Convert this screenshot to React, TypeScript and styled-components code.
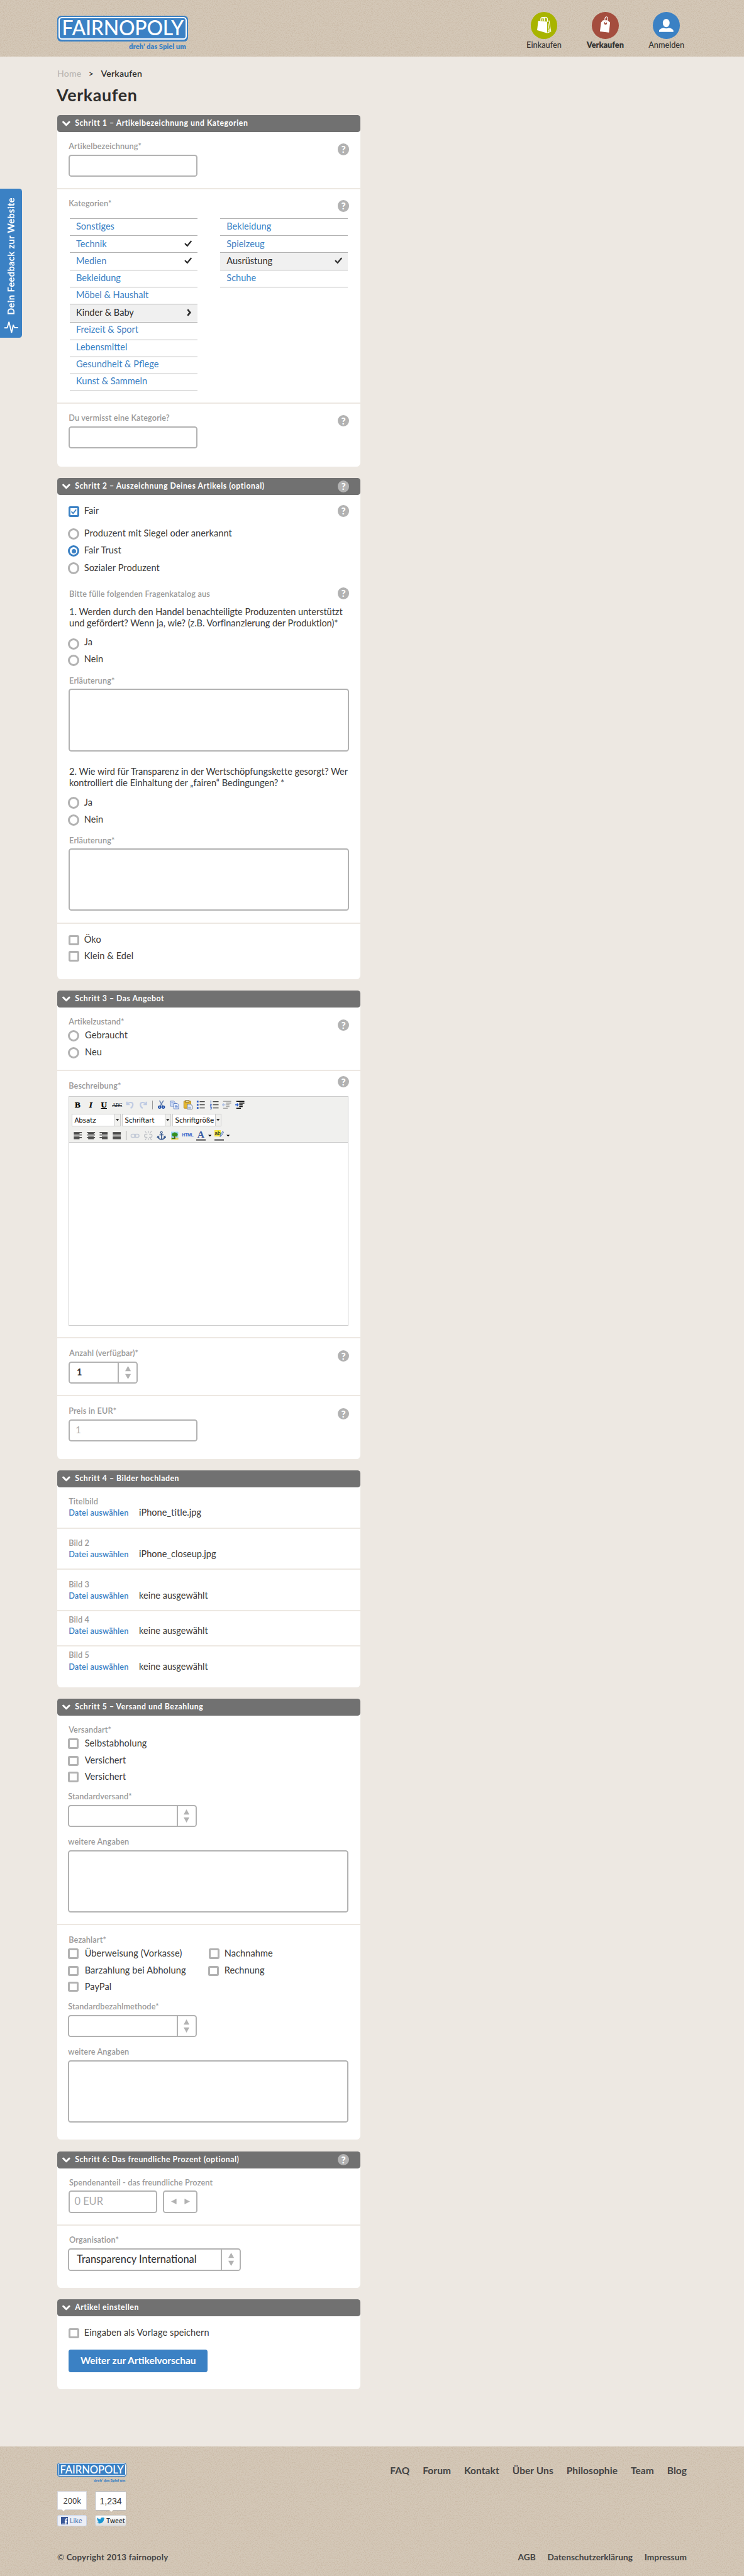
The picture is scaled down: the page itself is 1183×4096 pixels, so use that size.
import React from "react";
import styled, { createGlobalStyle, css } from "styled-components";

const BLUE = "#3b81c4";
const LINE = "#b2b2b2";
const RULE = "#ede8e2";

const GlobalStyle = createGlobalStyle`
  body {
    margin: 0;
    background: ${RULE};
    overflow-x: hidden;
  }
`;

const Page = styled.div`
  zoom: 0.91;
  width: 1300px;
  position: relative;
  background: ${RULE};
  color: #3a3a3a;
  font-family: Lato, "Open Sans", sans-serif;
  font-size: 16px;
  line-height: 20px;
  * {
    box-sizing: border-box;
  }
`;

/* ---------- linen bands ---------- */

const Band = styled.div<{ $h: number }>`
  position: relative;
  height: ${(p) => p.$h}px;
  background: #d4c8b8;
  overflow: hidden;
`;
const Grain = styled.svg`
  position: absolute;
  inset: 0;
  width: 100%;
  height: 100%;
`;
const Linen = ({ id }: { id: string }) => (
  <Grain aria-hidden="true">
    <filter id={id} x="0" y="0" width="100%" height="100%">
      <feTurbulence type="fractalNoise" baseFrequency="0.55 0.75" numOctaves="2" seed="4" />
      <feColorMatrix values="0 0 0 0 0.55  0 0 0 0 0.44  0 0 0 0 0.33  0 1.5 0 0 -0.62" />
    </filter>
    <rect width="100%" height="100%" filter={`url(#${id})`} />
  </Grain>
);

const HeaderInner = styled.div`
  position: relative;
  display: flex;
  justify-content: space-between;
  padding: 27px 100px 0;
`;

/* ---------- logo ---------- */

const LogoBox = styled.div<{ $small?: boolean }>`
  width: ${(p) => (p.$small ? 121 : 229)}px;
`;
const Plate = styled.div<{ $small?: boolean }>`
  height: ${(p) => (p.$small ? 23.5 : 45)}px;
  padding: ${(p) => (p.$small ? 1.2 : 2.3)}px;
  border-radius: ${(p) => (p.$small ? 4 : 7)}px;
  background: ${BLUE};
`;
const PlateInner = styled.div<{ $small?: boolean }>`
  height: 100%;
  display: flex;
  align-items: center;
  justify-content: center;
  border: ${(p) => (p.$small ? 1.1 : 2.2)}px solid #fff;
  border-radius: ${(p) => (p.$small ? 3 : 6)}px;
  color: #fff;
  white-space: nowrap;
  font-size: ${(p) => (p.$small ? 18.3 : 35)}px;
  line-height: 1;
  letter-spacing: ${(p) => (p.$small ? -0.1 : -0.2)}px;
  font-weight: 500;
`;
const Tagline = styled.div<{ $small?: boolean }>`
  margin: ${(p) => (p.$small ? "2px 2px 0 0" : "4px 4px 0 0")};
  text-align: right;
  color: ${BLUE};
  font-weight: 800;
  font-size: ${(p) => (p.$small ? 6.8 : 12.3)}px;
  line-height: ${(p) => (p.$small ? 9 : 12)}px;
`;
const Logo = ({ small }: { small?: boolean }) => (
  <LogoBox $small={small}>
    <Plate $small={small}>
      <PlateInner $small={small}>FAIRNOPOLY</PlateInner>
    </Plate>
    <Tagline $small={small}>dreh’ das Spiel um</Tagline>
  </LogoBox>
);

/* ---------- top navigation ---------- */

const TopNav = styled.nav`
  display: flex;
  margin: -6px -18px 0 0;
`;
const TopItem = styled.div<{ $active?: boolean }>`
  width: 107px;
  display: flex;
  flex-direction: column;
  align-items: center;
  font-size: 14px;
  font-weight: ${(p) => (p.$active ? 800 : 500)};
  color: #333;
  line-height: 20px;
`;
const Disc = styled.div<{ $c: string }>`
  width: 47px;
  height: 47px;
  border-radius: 50%;
  background: ${(p) => p.$c};
  svg {
    display: block;
  }
`;

const BagIcon = () => (
  <svg width="47" height="47" viewBox="0 0 47 47">
    <path d="M13 15.500 28.500 17 28.500 37 11 32Z" fill="#fff" />
    <path d="M17.5 16V13c0-4.5 6.500-4.500 6.500 0v3M21 16v-3c0-5 8-5 8 0v4" fill="none" stroke="#fff" strokeWidth="1.5" />
    <path d="M28.500 16.500 32 15.500 35 34 29 36.500M30.500 20l1.800 14M29.500 36l2.500-5 2.500 1" fill="none" stroke="#fff" strokeWidth="1.1" />
  </svg>
);
const TagIcon = () => (
  <svg width="47" height="47" viewBox="0 0 47 47">
    <path fillRule="evenodd" d="M19.500 14.500h8l4.500 4-2 17.500-15.800-1.800 2-15.700Zm4.500 2.500a2.600 2.600 0 1 0 .1 0Z" fill="#fff" />
    <path d="M24 19.500c-2-5-1.500-11 1.500-11s3 5-1 11" fill="none" stroke="#fff" strokeWidth="1.3" />
  </svg>
);
const UserIcon = () => (
  <svg width="47" height="47" viewBox="0 0 47 47">
    <ellipse cx="23.400" cy="19.300" rx="6" ry="7.300" fill="#fff" />
    <path d="M11 35v-2c0-3 5-4.800 8-5.200 2.500 1.500 6.500 1.500 9 0 3 .4 8 2.200 8 5.200v2Z" fill="#fff" />
  </svg>
);

/* ---------- feedback tab ---------- */

const Feedback = styled.aside`
  position: absolute;
  left: 0;
  top: 330px;
  width: 39px;
  height: 260px;
  padding-bottom: 7px;
  border-radius: 0 5px 5px 0;
  background: ${BLUE};
  color: #fff;
  display: flex;
  flex-direction: column;
  align-items: center;
  justify-content: flex-end;
  gap: 9px;
`;
const FeedbackText = styled.span`
  writing-mode: vertical-rl;
  transform: rotate(180deg);
  white-space: nowrap;
  font-weight: 700;
  font-size: 16px;
  line-height: 20px;
  letter-spacing: 0.45px;
`;

/* ---------- headings ---------- */

const Main = styled.main`
  width: 530px;
  margin-left: 100px;
`;
const Crumbs = styled.div`
  display: flex;
  padding-top: 20px;
  gap: 12.500px;
  font-size: 15.500px;
  font-weight: 600;
  color: #2e2e2e;
  letter-spacing: 0.2px;
`;
const CrumbHome = styled.span`
  color: #b9b6b2;
  font-weight: 500;
`;
const Title = styled.h1`
  margin: 9px 0 17px -1px;
  font-size: 29.500px;
  line-height: 36px;
  font-weight: 700;
  letter-spacing: 0.7px;
  color: #2e2e2e;
`;

/* ---------- panel ---------- */

const Panel = styled.section`
  margin-bottom: 20px;
  background: #fff;
  border-radius: 5px 5px 7px 7px;
`;
const PanelHead = styled.header`
  height: 30px;
  display: flex;
  align-items: center;
  padding: 0 20px 0 9px;
  border-radius: 5px;
  background: #717171;
  color: #fff;
  font-size: 13.500px;
  font-weight: 700;
  letter-spacing: 0.58px;
`;
const HeadTitle = styled.span`
  flex: 1;
  margin-left: 8px;
  padding-bottom: 1px;
`;
const Section = styled.div<{ $h: number; $last?: boolean }>`
  display: flow-root;
  height: ${(p) => p.$h}px;
  padding: 0 20px;
  ${(p) =>
    !p.$last &&
    css`
      border-bottom: 2.200px solid ${RULE};
    `}
`;
const Row = styled.div<{ $mt?: number }>`
  display: flex;
  justify-content: space-between;
  align-items: flex-start;
  height: 20px;
  margin-top: ${(p) => p.$mt ?? 15}px;
`;
const Label = styled.span<{ $x?: number }>`
  margin-left: ${(p) => p.$x ?? 0}px;
  color: #999;
  font-size: 14px;
  font-weight: 600;
  letter-spacing: 0.13px;
  white-space: nowrap;
`;
const HelpDot = styled.span<{ $dy?: number }>`
  flex: none;
  width: 20px;
  height: 20px;
  margin-top: ${(p) => p.$dy ?? 0}px;
  border-radius: 50%;
  background: ${LINE};
  color: #fff;
  text-align: center;
  font-size: 17px;
  line-height: 20px;
  font-weight: 900;
  letter-spacing: 0;
`;
const Help = ({ dy }: { dy?: number }) => <HelpDot $dy={dy}>?</HelpDot>;

const Chevron = () => (
  <svg width="14" height="10" viewBox="0 0 14 10">
    <path d="M1.800 2.200 7 7.400 12.200 2.200" fill="none" stroke="#fff" strokeWidth="3.300" strokeLinecap="round" strokeLinejoin="round" />
  </svg>
);

const Head = ({ title, help }: { title: string; help?: boolean }) => (
  <PanelHead>
    <Chevron />
    <HeadTitle>{title}</HeadTitle>
    {help && <Help />}
  </PanelHead>
);

const Field = ({ label, mt, x, dy, help }: { label: string; mt?: number; x?: number; dy?: number; help?: boolean }) => (
  <Row $mt={mt}>
    <Label $x={x}>{label}</Label>
    {help && <Help dy={dy} />}
  </Row>
);

/* ---------- inputs ---------- */

const Box = styled.div<{ $w: number; $h?: number; $ml?: number }>`
  display: flex;
  align-items: center;
  width: ${(p) => p.$w}px;
  height: ${(p) => p.$h ?? 39}px;
  margin: 5px 0 0 ${(p) => p.$ml ?? 0}px;
  border: 2.200px solid ${LINE};
  border-radius: 5px;
  background: #fff;
`;
const Value = styled.span<{ $size?: number; $muted?: boolean; $pl?: number; $bold?: boolean }>`
  flex: 1;
  padding: 0 0 1px ${(p) => p.$pl ?? 10}px;
  font-size: ${(p) => p.$size ?? 16}px;
  font-weight: ${(p) => (p.$bold ? 700 : 400)};
  color: ${(p) => (p.$muted ? "#aaa" : "#2e2e2e")};
`;
const Stepper = styled.span`
  width: 33px;
  height: 100%;
  display: flex;
  align-items: center;
  justify-content: center;
  border-left: 2.200px solid ${LINE};
`;
const Arrows = () => (
  <Stepper>
    <svg width="10" height="23" viewBox="0 0 10 23">
      <path d="M5 0 10 9H0ZM5 23 10 14H0Z" fill={LINE} />
    </svg>
  </Stepper>
);
const Pair = styled.div`
  display: flex;
  gap: 10px;
`;
const Sides = styled.span`
  flex: 1;
  display: flex;
  justify-content: center;
`;

/* ---------- radio and checkbox options ---------- */

const OptionRow = styled.label<{ $mt?: number; $x: number; $gap: number }>`
  display: flex;
  align-items: center;
  height: 20px;
  margin: ${(p) => p.$mt ?? 0}px 0 0 ${(p) => p.$x}px;
  gap: ${(p) => p.$gap}px;
`;
const Slot = styled.span`
  flex: none;
  width: 20px;
  height: 20px;
  display: flex;
  align-items: center;
  justify-content: center;
`;
const Ring = styled.span<{ $on?: boolean }>`
  width: 20px;
  height: 20px;
  border-radius: 50%;
  border: 3.300px solid ${(p) => (p.$on ? BLUE : LINE)};
  display: flex;
  align-items: center;
  justify-content: center;
  &::after {
    content: "";
    width: 8px;
    height: 8px;
    border-radius: 50%;
    background: ${(p) => (p.$on ? BLUE : "transparent")};
  }
`;
const Square = styled.span<{ $on?: boolean }>`
  width: 18px;
  height: 18px;
  border-radius: 3px;
  border: 3.300px solid ${(p) => (p.$on ? BLUE : LINE)};
  display: flex;
  align-items: center;
  justify-content: center;
`;
const OptionText = styled.span<{ $dy: number }>`
  white-space: nowrap;
  margin-top: ${(p) => -2 + p.$dy * 2}px;
  letter-spacing: 0.1px;
`;
type OptionProps = { text: string; kind?: "radio" | "check"; on?: boolean; mt?: number; x?: number; gap?: number; dy?: number };
const Option = ({ text, kind = "radio", on, mt, x = -1, gap = 8, dy = 0 }: OptionProps) => (
  <OptionRow $mt={mt} $x={x} $gap={gap}>
    <Slot>
      {kind === "radio" ? (
        <Ring $on={on} />
      ) : (
        <Square $on={on}>
          {on && (
            <svg width="12" height="12" viewBox="0 0 12 12">
              <path d="M1.800 6 5 9.300 10.500 2.300" fill="none" stroke={BLUE} strokeWidth="2.200" />
            </svg>
          )}
        </Square>
      )}
    </Slot>
    <OptionText $dy={dy}>{text}</OptionText>
  </OptionRow>
);

const Question = styled.p<{ $mt: number }>`
  margin: ${(p) => p.$mt}px -10px 0 1px;
  line-height: 19px;
  white-space: pre;
  letter-spacing: -0.03px;
`;
const Columns = styled.div`
  display: grid;
  grid-template-columns: 246px 1fr;
`;

/* ---------- category lists ---------- */

const Lists = styled.div`
  display: flex;
  gap: 40px;
  margin: 16px 0 0 2px;
`;
const List = styled.ul`
  width: 223px;
  margin: 0;
  padding: 0;
  list-style: none;
  border-top: 1px solid ${LINE};
  align-self: flex-start;
`;
const Cat = styled.li<{ $sel?: boolean; $tall?: boolean; $up?: boolean }>`
  height: ${(p) => (p.$tall ? 32 : 30)}px;
  padding: 0 9px ${(p) => (p.$up ? 4 : p.$tall ? 3 : 1)}px 11px;
  display: flex;
  align-items: center;
  justify-content: space-between;
  border-bottom: 1px solid ${LINE};
  background: ${(p) => (p.$sel ? "#f0f0f0" : "#fff")};
  color: ${(p) => (p.$sel ? "#2e2e2e" : BLUE)};
`;
const Tick = () => (
  <svg width="14" height="12" viewBox="0 0 14 12">
    <path d="M1.800 6.300 5.300 9.800 11.800 2" fill="none" stroke="#2b2b2b" strokeWidth="2.500" strokeLinecap="round" />
  </svg>
);
const Next = () => (
  <svg width="10" height="13" viewBox="0 0 10 13">
    <path d="M2.300 2.200 5.800 6.500 2.300 10.800" fill="none" stroke="#2b2b2b" strokeWidth="3" strokeLinecap="round" />
  </svg>
);
const LEFT = ["Sonstiges", "Technik", "Medien", "Bekleidung", "Möbel & Haushalt", "Kinder & Baby", "Freizeit & Sport", "Lebensmittel", "Gesundheit & Pflege", "Kunst & Sammeln"];
const RIGHT = ["Bekleidung", "Spielzeug", "Ausrüstung", "Schuhe"];

/* ---------- rich text editor ---------- */

const Editor = styled.div`
  width: 489px;
  height: 402px;
  margin-top: 8px;
  border: 1px solid #ccc;
`;
const Tools = styled.div`
  height: 81px;
  padding: 4px 3px 0;
  border-bottom: 1px solid #ccc;
  background: #f0f0ee;
`;
const ToolRow = styled.div<{ $mt?: number }>`
  display: flex;
  align-items: center;
  height: 22px;
  margin-top: ${(p) => p.$mt ?? 0}px;
`;
const Tool = styled.span<{ $w?: number; $dim?: boolean }>`
  width: ${(p) => p.$w ?? 23}px;
  display: flex;
  justify-content: center;
  opacity: ${(p) => (p.$dim ? 0.32 : 1)};
`;
const Glyph = styled.span<{ $i?: boolean; $u?: boolean }>`
  color: #000;
  font: ${(p) => (p.$i ? "italic" : "normal")} 900 14.500px/16px "Liberation Serif", serif;
  text-decoration: ${(p) => (p.$u ? "underline" : "none")};
  -webkit-text-stroke: 0.4px #000;
`;
const Abc = styled.span`
  color: #222;
  font: 9.500px/14px "Liberation Serif", serif;
  letter-spacing: -0.8px;
  text-decoration: line-through;
`;
const Html = styled.span`
  color: #2b5fc9;
  font: 700 7.500px/12px "Liberation Sans", sans-serif;
  letter-spacing: -0.3px;
`;
const ColorMark = styled.span<{ $hi?: boolean }>`
  width: 16px;
  height: 19px;
  border-bottom: 4px solid #888;
  text-align: center;
  color: ${(p) => (p.$hi ? "#222" : "#3a5ba0")};
  font: ${(p) => (p.$hi ? '9.500px/11px "Liberation Sans", sans-serif' : '700 17px/15px "Liberation Serif", serif')};
`;
const Marker = styled.span`
  display: flex;
  align-items: flex-start;
  mark {
    color: inherit;
    background: #f2e43c;
  }
  svg {
    flex: none;
    margin: 1px 0 0 -3px;
  }
`;
const ToolSep = styled.span`
  width: 1px;
  height: 16px;
  margin: 0 4px 0 3.500px;
  background: #999;
`;
const ToolSelect = styled.span`
  width: 86px;
  height: 22px;
  margin: 0 1px;
  display: flex;
  border: 1px solid #ccc;
  background: #fff;
  color: #000;
  font: 11.300px/20px "DejaVu Sans", sans-serif;
  white-space: nowrap;
  overflow: hidden;
`;
const SelectText = styled.span`
  flex: 1;
  min-width: 0;
  padding-left: 4px;
  letter-spacing: -0.1px;
`;
const SelectArrow = styled.span`
  width: 10px;
  display: flex;
  align-items: center;
  justify-content: center;
  border-left: 1px solid #ccc;
  background: #f0f0ee;
`;
const Down = () => (
  <svg width="6" height="4" viewBox="0 0 6 4">
    <path d="M0 .5H6L3 3.500Z" fill="#000" />
  </svg>
);
const Ico = ({ children }: { children: React.ReactNode }) => (
  <svg width="17" height="17" viewBox="0 0 17 17" fill="none">
    {children}
  </svg>
);
const Lines = ({ short }: { short: "r" | "c" | "l" | "n" }) => {
  const x = short === "l" ? 5.5 : short === "c" ? 3.5 : 1.5;
  const w = short === "n" ? 14 : 10;
  return (
    <Ico>
      {[2.5, 4.7, 6.9, 9.1, 11.3, 13.5].map((y, i) => (
        <rect key={y} x={i % 2 ? x : 1.5} y={y} width={i % 2 ? w : 14} height="1.100" fill="#000" />
      ))}
    </Ico>
  );
};
const Indent = ({ out }: { out?: boolean }) => (
  <Ico>
    <path d="M2 2.500H16M7 5.500H16M7 8.500H13M7 11.500H13M2 14.500H10" stroke="#111" strokeWidth="1.500" />
    <path d={out ? "M6 8.500H1M3 6 .8 8.500 3 11" : "M0 8.500H5M3 6 5.200 8.500 3 11"} stroke="#2c62d0" strokeWidth="1.600" />
  </Ico>
);
const RichText = () => (
  <Editor>
    <Tools>
      <ToolRow>
        <Tool><Glyph>B</Glyph></Tool>
        <Tool><Glyph $i>I</Glyph></Tool>
        <Tool><Glyph $u>U</Glyph></Tool>
        <Tool><Abc>ABC</Abc></Tool>
        <Tool $dim><Ico><path d="M3 3v5h5M3.500 7.500C7 3 13.500 3.500 13.500 8c0 3-1.500 5-4 6.500" stroke="#5b7fce" strokeWidth="2.400" /></Ico></Tool>
        <Tool $dim><Ico><path d="M14 3v5H9M13.500 7.500C10 3 3.500 3.500 3.500 8c0 3 1.500 5 4 6.500" stroke="#5b7fce" strokeWidth="2.400" /></Ico></Tool>
        <ToolSep />
        <Tool>
          <Ico>
            <path d="M5 1 10.500 10.500M12 1 6.500 10.500" stroke="#6d88b5" strokeWidth="1.800" />
            <circle cx="5.300" cy="12.500" r="2" stroke="#1f4fa8" strokeWidth="2" />
            <circle cx="11.700" cy="12.500" r="2" stroke="#1f4fa8" strokeWidth="2" />
          </Ico>
        </Tool>
        <Tool>
          <Ico>
            <path d="M1 2h6l2 2v7H1Z" fill="#dfe9fb" stroke="#5f82c4" />
            <path d="M7 6h6l2.500 2.500V15.500H7Z" fill="#e9f0fd" stroke="#4a70bb" />
            <path d="M2.500 5h4M2.500 7h4M9 9.500h4M9 11.500h5M9 13.500h5" stroke="#6f90d0" />
          </Ico>
        </Tool>
        <Tool>
          <Ico>
            <rect x="1.500" y="2" width="12" height="12.500" rx="1" fill="#e3b52e" stroke="#a87a14" />
            <rect x="4.500" y=".8" width="6" height="3.400" fill="#ead9a0" stroke="#806522" />
            <path d="M7.500 7.500h6l2.500 2.500v6H7.500Z" fill="#eef3fd" stroke="#55617a" />
            <path d="M9 10.500h4M9 12.500h5M9 14.300h5" stroke="#7f98c8" />
          </Ico>
        </Tool>
        <Tool>
          <Ico>
            <path d="M6 3H15M6 8.500H15M6 14H15" stroke="#111" strokeWidth="1.100" />
            <path d="M1 3H4M1 8.500H4M1 14H4" stroke="#2c5ac0" strokeWidth="3" />
          </Ico>
        </Tool>
        <Tool>
          <Ico>
            <path d="M6 3H16M6 8.500H16M6 14H16" stroke="#111" strokeWidth="1.100" />
            <path d="M2.500 1V5M1 7h2.500v1.500H1.500V10H4M1 12h2.500v4H1M1.500 14h2" stroke="#2c5ac0" />
          </Ico>
        </Tool>
        <Tool $dim><Indent out /></Tool>
        <Tool><Indent /></Tool>
      </ToolRow>
      <ToolRow $mt={4}>
        {["Absatz", "Schriftart", "Schriftgröße"].map((t) => (
          <ToolSelect key={t}>
            <SelectText>{t}</SelectText>
            <SelectArrow><Down /></SelectArrow>
          </ToolSelect>
        ))}
      </ToolRow>
      <ToolRow $mt={5}>
        <Tool><Lines short="r" /></Tool>
        <Tool><Lines short="c" /></Tool>
        <Tool><Lines short="l" /></Tool>
        <Tool><Lines short="n" /></Tool>
        <ToolSep />
        <Tool $dim>
          <Ico>
            <rect x="1.500" y="6" width="8" height="5.500" rx="2.700" stroke="#667da8" strokeWidth="1.600" />
            <rect x="7.500" y="6" width="8" height="5.500" rx="2.700" stroke="#667da8" strokeWidth="1.600" />
          </Ico>
        </Tool>
        <Tool $dim>
          <Ico>
            <path d="M7 6H4.500a2.700 2.700 0 0 0 0 5.400H7M10 6h2.500a2.700 2.700 0 0 1 0 5.400H10M8.500 4V0M5 3.500 3 1M12 3.500 14.500.5M8.500 13v4M5 13.500 3 16M12 13.500 14.500 16" stroke="#555f70" strokeWidth="1.400" />
          </Ico>
        </Tool>
        <Tool>
          <Ico>
            <circle cx="8.500" cy="3" r="1.600" stroke="#38598f" strokeWidth="1.300" />
            <path d="M8.500 4.500V15M5 7.200H12M2.500 10c0 3.500 2.500 5 6 5s6-1.500 6-5M1 12l1.500-2.500 2.200 2M16 12l-1.500-2.500-2.200 2" stroke="#38598f" strokeWidth="1.700" />
          </Ico>
        </Tool>
        <Tool>
          <Ico>
            <rect x="1.500" y="1" width="14" height="15" fill="#9fd4f4" stroke="#fff" />
            <path d="M2 12h13v3.500H2Z" fill="#ecd05a" />
            <path d="M8.500 8v6" stroke="#6b4416" strokeWidth="2" />
            <path d="M4 8a2.500 2.500 0 0 1 2-4 3 3 0 0 1 5 0 2.600 2.600 0 0 1 2.500 4 2 2 0 0 1-2.500 2H6a2 2 0 0 1-2-2Z" fill="#33901f" />
            <path d="M3.500 13.500h6" stroke="#2f7d1c" strokeWidth="2" />
          </Ico>
        </Tool>
        <Tool><Html>HTML</Html></Tool>
        <Tool><ColorMark>A</ColorMark></Tool>
        <Tool $w={9}><Down /></Tool>
        <Tool>
          <ColorMark $hi>
            <Marker>
              <mark>ab</mark>
              <svg width="9" height="12" viewBox="0 0 9 12">
                <path d="M2 10.500 3 7 6.500 1.200 8.300 2.300 5 8.200Z" fill="#c9d9f4" stroke="#4a6aa8" strokeWidth=".9" />
              </svg>
            </Marker>
          </ColorMark>
        </Tool>
        <Tool $w={9}><Down /></Tool>
      </ToolRow>
    </Tools>
  </Editor>
);

/* ---------- uploads ---------- */

const FileRow = styled.div`
  display: flex;
  height: 20px;
  span:first-child {
    width: 123px;
    color: ${BLUE};
    font-size: 14px;
    font-weight: 600;
    letter-spacing: 0.15px;
  }
`;
const FILES = [
  { name: "Titelbild", file: "iPhone_title.jpg", mt: 14, h: 72 },
  { name: "Bild 2", file: "iPhone_closeup.jpg", mt: 15, h: 72 },
  { name: "Bild 3", file: "keine ausgewählt", mt: 15, h: 72 },
  { name: "Bild 4", file: "keine ausgewählt", mt: 5, h: 62 },
  { name: "Bild 5", file: "keine ausgewählt", mt: 5, h: 71 },
];

const Submit = styled.button`
  display: block;
  width: 243px;
  height: 39px;
  margin: 19px 0 0;
  padding: 0 0 2px;
  border: 0;
  border-radius: 4px;
  background: ${BLUE};
  color: #fff;
  font: 700 17px/20px Lato, sans-serif;
`;

/* ---------- footer ---------- */

const FooterGap = styled.div`
  height: 80px;
`;
const FootGrid = styled.footer`
  position: relative;
  height: 226px;
  padding: 29px 100px 22px;
  display: flex;
  justify-content: space-between;
  color: #444;
`;
const FootCol = styled.div<{ $end?: boolean }>`
  display: flex;
  flex-direction: column;
  justify-content: space-between;
  align-items: ${(p) => (p.$end ? "flex-end" : "flex-start")};
`;
const Links = styled.nav<{ $size: number; $gap: number; $mt?: number }>`
  display: flex;
  gap: ${(p) => p.$gap}px;
  margin-top: ${(p) => p.$mt ?? 0}px;
  font-size: ${(p) => p.$size}px;
  font-weight: 700;
  letter-spacing: 0.1px;
`;
const Copyright = styled.div`
  font-size: 14.500px;
  font-weight: 700;
  letter-spacing: 0.3px;
  span {
    font-weight: 400;
  }
`;
const Social = styled.div`
  display: flex;
  gap: 14px;
  margin-top: 14px;
`;
const Share = styled.div<{ $w: number }>`
  width: ${(p) => p.$w}px;
`;
const Count = styled.div<{ $fb?: boolean }>`
  position: relative;
  height: ${(p) => (p.$fb ? 34 : 35)}px;
  border: 1px solid ${(p) => (p.$fb ? "#d6d6dc" : "#bbb")};
  border-radius: ${(p) => (p.$fb ? 0 : 2)}px;
  background: #fff;
  color: #333;
  text-align: center;
  font: ${(p) => (p.$fb ? '14px/32px "Open Sans"' : '15.500px/35px "Liberation Sans"')}, sans-serif;
  &::after {
    content: "";
    position: absolute;
    left: ${(p) => (p.$fb ? 7 : 24)}px;
    top: 100%;
    border: solid transparent;
    border-width: 4px 4px 0;
    border-top-color: #fff;
  }
`;
const ShareBtn = styled.div<{ $fb?: boolean }>`
  height: 20px;
  margin-top: ${(p) => (p.$fb ? 8 : 7)}px;
  display: flex;
  align-items: center;
  gap: 3px;
  padding-left: ${(p) => (p.$fb ? 5 : 2)}px;
  border: 1px solid ${(p) => (p.$fb ? "#cad4e7" : "#ccc")};
  border-radius: 3px;
  background: ${(p) => (p.$fb ? "#eceef5" : "linear-gradient(#fff, #dedede)")};
  color: ${(p) => (p.$fb ? "#3b5998" : "#333")};
  font: ${(p) => (p.$fb ? '11.500px "Open Sans"' : '600 11px "Open Sans"')}, sans-serif;
`;
const FbIcon = () => (
  <svg width="13" height="13" viewBox="0 0 13 13">
    <rect width="13" height="13" fill="#3b5998" />
    <path d="M8.500 13V8.500H11M8.500 8.500H6.500M8.500 9V5.200c0-1.600.8-2.200 2.700-2.100" stroke="#fff" strokeWidth="1.900" fill="none" />
    <path d="M1 11.500h6" stroke="#7d93c2" />
  </svg>
);
const BirdIcon = () => (
  <svg width="14" height="12" viewBox="0 0 14 12">
    <path d="M.5 1.500C2.300 3.300 4.200 4.200 6.500 4.300 6.300 1.500 8.800.2 11 1.500l1.800-.6-.8 1.600 1.800.4-1.500 1.200C12 9 8 12.200 3.200 11.300 1.800 11 .8 10.500.2 9.800c1.600.1 2.700-.3 3.600-1C2.300 8.500 1.500 7.700 1.200 6.800h1.200C1 6 .5 5.200.5 4l1 .4C.3 3.500 0 2.500.5 1.500Z" fill="#1b95d0" />
  </svg>
);

export default function App() {
  return (
    <>
      <GlobalStyle />
      <Page>
        <Band $h={99}>
          <Linen id="linen-top" />
          <HeaderInner>
            <Logo />
            <TopNav>
              <TopItem>
                <Disc $c="#a8b400"><BagIcon /></Disc>
                Einkaufen
              </TopItem>
              <TopItem $active>
                <Disc $c="#a44d3e"><TagIcon /></Disc>
                Verkaufen
              </TopItem>
              <TopItem>
                <Disc $c={BLUE}><UserIcon /></Disc>
                Anmelden
              </TopItem>
            </TopNav>
          </HeaderInner>
        </Band>

        <Feedback>
          <FeedbackText>Dein Feedback zur Website</FeedbackText>
          <svg width="24" height="24" viewBox="0 0 24 24">
            <path d="M0 13.500H5L8 3 12.500 22 15.500 8.500 17.500 13H24" fill="none" stroke="#fff" strokeWidth="2" strokeLinejoin="bevel" />
          </svg>
        </Feedback>

        <Main>
          <Crumbs>
            <CrumbHome>Home</CrumbHome>
            <span>&gt;</span>
            <span>Verkaufen</span>
          </Crumbs>
          <Title>Verkaufen</Title>

          <Panel>
            <Head title="Schritt 1 – Artikelbezeichnung und Kategorien" />
            <Section $h={100}>
              <Field label="Artikelbezeichnung*" mt={14} help dy={6} />
              <Box $w={225} />
            </Section>
            <Section $h={375}>
              <Field label="Kategorien*" mt={14} help dy={5} />
              <Lists>
                <List>
                  {LEFT.map((t, i) => (
                    <Cat key={t} $sel={i === 5} $tall={i === 5} $up={i > 5}>
                      {t}
                      {(i === 1 || i === 2) && <Tick />}
                      {i === 5 && <Next />}
                    </Cat>
                  ))}
                </List>
                <List>
                  {RIGHT.map((t, i) => (
                    <Cat key={t} $sel={i === 2}>
                      {t}
                      {i === 2 && <Tick />}
                    </Cat>
                  ))}
                </List>
              </Lists>
            </Section>
            <Section $last $h={109}>
              <Field label="Du vermisst eine Kategorie?" mt={14} help dy={5} />
              <Box $w={225} />
            </Section>
          </Panel>

          <Panel>
            <Head title="Schritt 2 – Auszeichnung Deines Artikels (optional)" help />
            <Section $h={749}>
              <Row $mt={19}>
                <Option kind="check" on text="Fair" />
                <Help dy={-1} />
              </Row>
              <Option mt={19} text="Produzent mit Siegel oder anerkannt" />
              <Option mt={10} on text="Fair Trust" />
              <Option mt={10} text="Sozialer Produzent" />
              <Field label="Bitte fülle folgenden Fragenkatalog aus" mt={25} x={1} help dy={-1} />
              <Question $mt={12}>
                {"1. Werden durch den Handel benachteiligte Produzenten unterstützt\nund gefördert? Wenn ja, wie? (z.B. Vorfinanzierung der Produktion)*"}
              </Question>
              <Option mt={17} text="Ja" dy={-2} />
              <Option mt={9} text="Nein" dy={-1} />
              <Field label="Erläuterung*" x={1} />
              <Box $w={490} $h={109} />
              <Question $mt={26}>
                {"2. Wie wird für Transparenz in der Wertschöpfungskette gesorgt? Wer\nkontrolliert die Einhaltung der „fairen“ Bedingungen? *"}
              </Question>
              <Option mt={16} text="Ja" />
              <Option mt={10} text="Nein" />
              <Field label="Erläuterung*" x={1} />
              <Box $w={490} $h={109} />
            </Section>
            <Section $last $h={97}>
              <Option mt={19} kind="check" text="Öko" />
              <Option mt={8} kind="check" text="Klein & Edel" />
            </Section>
          </Panel>

          <Panel>
            <Head title="Schritt 3 – Das Angebot" />
            <Section $h={111}>
              <Field label="Artikelzustand*" mt={14} help dy={6} />
              <Option mt={5} gap={9.5} text="Gebraucht" />
              <Option mt={10} gap={9.5} text="Neu" />
            </Section>
            <Section $h={467}>
              <Field label="Beschreibung*" help dy={-7} />
              <RichText />
            </Section>
            <Section $h={101}>
              <Field label="Anzahl (verfügbar)*" x={1} help dy={5} />
              <Box $w={121}>
                <Value $bold $pl={12}>1</Value>
                <Arrows />
              </Box>
            </Section>
            <Section $last $h={109}>
              <Field label="Preis in EUR*" help dy={5} />
              <Box $w={225}>
                <Value $muted>1</Value>
              </Box>
            </Section>
          </Panel>

          <Panel>
            <Head title="Schritt 4 – Bilder hochladen" />
            {FILES.map((f, i) => (
              <Section key={f.name} $h={f.h} $last={i === FILES.length - 1}>
                <Field label={f.name} mt={f.mt} />
                <FileRow>
                  <span>Datei auswählen</span>
                  <span>{f.file}</span>
                </FileRow>
              </Section>
            ))}
          </Panel>

          <Panel>
            <Head title="Schritt 5 – Versand und Bezahlung" />
            <Section $h={366}>
              <Field label="Versandart*" mt={14} />
              <Option kind="check" x={-2} gap={10} mt={5} text="Selbstabholung" />
              <Option kind="check" x={-2} gap={10} mt={10} text="Versichert" />
              <Option kind="check" x={-2} gap={10} mt={8} text="Versichert" dy={1} />
              <Field label="Standardversand*" mt={14} x={-1} />
              <Box $w={225} $ml={-1}>
                <Value />
                <Arrows />
              </Box>
              <Field label="weitere Angaben" x={-1} />
              <Box $w={490} $h={109} $ml={-1} />
            </Section>
            <Section $last $h={375}>
              <Field label="Bezahlart*" />
              <Columns>
                <Option kind="check" x={-2} gap={10} mt={5} text="Überweisung (Vorkasse)" />
                <Option kind="check" x={-2} gap={8} mt={5} text="Nachnahme" />
                <Option kind="check" x={-2} gap={10} mt={10} text="Barzahlung bei Abholung" />
                <Option kind="check" x={-3} gap={9} mt={10} text="Rechnung" />
                <Option kind="check" x={-2} gap={10} mt={8} text="PayPal" dy={1} />
              </Columns>
              <Field label="Standardbezahlmethode*" mt={14} x={-1} />
              <Box $w={225} $ml={-1}>
                <Value />
                <Arrows />
              </Box>
              <Field label="weitere Angaben" x={-1} />
              <Box $w={490} $h={109} $ml={-1} />
            </Section>
          </Panel>

          <Panel>
            <Head title="Schritt 6: Das freundliche Prozent (optional)" help />
            <Section $h={100}>
              <Field label="Spendenanteil - das freundliche Prozent" mt={14} x={1} />
              <Pair>
                <Box $w={155}>
                  <Value $muted $size={18} $pl={8}>0 EUR</Value>
                </Box>
                <Box $w={60}>
                  <Sides>
                    <svg width="33" height="10" viewBox="0 0 33 10">
                      <path d="M0 5 9.500 0V10ZM33 5 23.500 0V10Z" fill={LINE} />
                    </svg>
                  </Sides>
                </Box>
              </Pair>
            </Section>
            <Section $last $h={109}>
              <Field label="Organisation*" x={1} />
              <Box $w={302} $ml={-1}>
                <Value $size={18} $pl={13}>Transparency International</Value>
                <Arrows />
              </Box>
            </Section>
          </Panel>

          <Panel>
            <Head title="Artikel einstellen" />
            <Section $last $h={127}>
              <Option kind="check" mt={19} text="Eingaben als Vorlage speichern" />
              <Submit>Weiter zur Artikelvorschau</Submit>
            </Section>
          </Panel>
        </Main>

        <FooterGap />
        <Band $h={226}>
          <Linen id="linen-bottom" />
          <FootGrid>
            <FootCol>
              <div>
                <Logo small />
                <Social>
                  <Share $w={52}>
                    <Count $fb>200k</Count>
                    <ShareBtn $fb><FbIcon />Like</ShareBtn>
                  </Share>
                  <Share $w={55}>
                    <Count>1,234</Count>
                    <ShareBtn><BirdIcon />Tweet</ShareBtn>
                  </Share>
                </Social>
              </div>
              <Copyright><span>©</span> Copyright 2013 fairnopoly</Copyright>
            </FootCol>
            <FootCol $end>
              <Links $size={17} $gap={23} $mt={3}>
                {["FAQ", "Forum", "Kontakt", "Über Uns", "Philosophie", "Team", "Blog"].map((t) => (
                  <span key={t}>{t}</span>
                ))}
              </Links>
              <Links $size={15} $gap={20.5}>
                {["AGB", "Datenschutzerklärung", "Impressum"].map((t) => (
                  <span key={t}>{t}</span>
                ))}
              </Links>
            </FootCol>
          </FootGrid>
        </Band>
      </Page>
    </>
  );
}
